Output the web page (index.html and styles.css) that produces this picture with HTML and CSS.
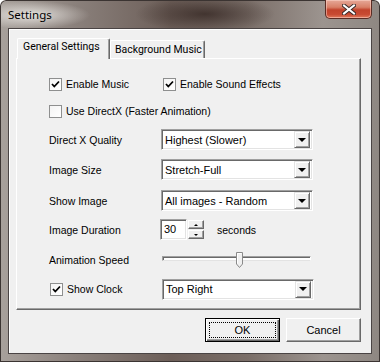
FILE: index.html
```html
<!DOCTYPE html>
<html lang="en">

<head>
    <meta charset="UTF-8">
    <title>Settings</title>
    <link rel="stylesheet" href="styles.css">
</head>

<body>
    <div class="window">
        <!-- タイトルバー -->
        <div class="titlebar">
            <span class="title">Settings</span>
            <div class="close-btn">
                <svg width="14" height="11" viewBox="0 0 14 11">
                    <path d="M2 1.5 L12 9.5 M12 1.5 L2 9.5" stroke="#3a2a28" stroke-width="4" stroke-linecap="square" />
                    <path d="M2 1.5 L12 9.5 M12 1.5 L2 9.5" stroke="#fff" stroke-width="2" stroke-linecap="square" />
                </svg>
            </div>
        </div>

        <div class="client">
            <!-- タブ -->
            <div class="tabs">
                <div class="tab active">General Settings</div>
                <div class="tab">Background Music</div>
            </div>

            <div class="panel">
                <div class="row row-1">
                    <div class="check first">
                        <span class="box"><svg width="11" height="11" viewBox="0 0 11 11"><polyline points="2,5 4.3,7.5 9,2.5" fill="none" stroke="#000" stroke-width="1.8" /></svg></span>
                        <span>Enable Music</span>
                    </div>
                    <div class="check">
                        <span class="box"><svg width="11" height="11" viewBox="0 0 11 11"><polyline points="2,5 4.3,7.5 9,2.5" fill="none" stroke="#000" stroke-width="1.8" /></svg></span>
                        <span>Enable Sound Effects</span>
                    </div>
                </div>

                <div class="row row-2">
                    <div class="check">
                        <span class="box"></span>
                        <span>Use DirectX (Faster Animation)</span>
                    </div>
                </div>

                <div class="row row-3">
                    <span class="label">Direct X Quality</span>
                    <div class="combo"><span class="value">Highest (Slower)</span><span class="drop"></span></div>
                </div>

                <div class="row row-4">
                    <span class="label">Image Size</span>
                    <div class="combo"><span class="value">Stretch-Full</span><span class="drop"></span></div>
                </div>

                <div class="row row-5">
                    <span class="label">Show Image</span>
                    <div class="combo"><span class="value">All images - Random</span><span class="drop"></span></div>
                </div>

                <div class="row row-6">
                    <span class="label">Image Duration</span>
                    <div class="num">30</div>
                    <div class="spin">
                        <span class="spin-btn"><i class="up"></i></span>
                        <span class="spin-btn"><i class="down"></i></span>
                    </div>
                    <span class="unit">seconds</span>
                </div>

                <div class="row row-7">
                    <span class="label">Animation Speed</span>
                    <div class="slider">
                        <div class="track"></div>
                        <svg class="thumb" width="7" height="16" viewBox="0 0 7 16">
                            <path d="M0.5 0.5 H6.5 V12 L3.5 15.5 L0.5 12 Z" fill="#f0f0f0" stroke="#8a8a8a" />
                            <path d="M1.5 1.5 H5.5 M1.5 1.5 V11.5" stroke="#fff" fill="none" />
                        </svg>
                    </div>
                </div>

                <div class="row row-8">
                    <div class="check label">
                        <span class="box"><svg width="11" height="11" viewBox="0 0 11 11"><polyline points="2,5 4.3,7.5 9,2.5" fill="none" stroke="#000" stroke-width="1.8" /></svg></span>
                        <span>Show Clock</span>
                    </div>
                    <div class="combo"><span class="value">Top Right</span><span class="drop"></span></div>
                </div>
            </div>

            <!-- ボタン -->
            <div class="buttons">
                <div class="btn default"><span class="focus">OK</span></div>
                <div class="btn">Cancel</div>
            </div>
        </div>
    </div>
</body>

</html>
```

FILE: styles.css
```css
html,
body {
    margin: 0;
    padding: 0;
    width: 380px;
    height: 362px;
    overflow: hidden;
    background: #fff;
}

.window {
    width: 380px;
    height: 362px;
    box-sizing: border-box;
    padding: 0 8px 8px 8px;
    display: flex;
    flex-direction: column;
    border-radius: 6px 6px 0 0;
    background:
        radial-gradient(ellipse 60px 14px at 30px 15px, rgba(235, 232, 228, 0.9), rgba(235, 232, 228, 0)),
        radial-gradient(ellipse 70px 18px at 205px 14px, rgba(50, 36, 32, 0.75), rgba(50, 36, 32, 0)),
        linear-gradient(90deg, #a8a19c 0%, #8a807b 20%, #6c5e58 45%, #7a6e68 65%, #9c948f 85%, #8e8782 100%);
    box-shadow: inset 0 0 0 1px #3b3432;
}

/* タイトルバー */
.titlebar {
    height: 28px;
    display: flex;
    align-items: flex-start;
}

.title {
    margin-top: 7px;
    font-family: "Noto Sans", sans-serif;
    font-size: 11.5px;
    color: #000;
}

.close-btn {
    margin-left: auto;
    width: 47px;
    height: 19px;
    box-sizing: border-box;
    border: 1px solid #5a2c24;
    border-top: none;
    border-radius: 0 0 5px 5px;
    background: linear-gradient(180deg, #e6a898 0%, #d88068 40%, #c2432c 55%, #c84a32 80%, #e07a5c 100%);
    box-shadow: inset 0 0 0 1px rgba(255, 220, 210, 0.5);
    display: flex;
    justify-content: center;
    align-items: center;
}

/* クライアント領域 */
.client {
    flex: 1;
    background: #f0f0f0;
    border: 1px solid #4a4444;
    box-shadow: inset 1px 1px 0 #fff;
    padding: 9px 10px 0 7px;
    font-family: "Liberation Sans", Arial, sans-serif;
    font-size: 10.5px;
    color: #000;
}

.tabs {
    display: flex;
    align-items: flex-end;
    padding-left: 1px;
    height: 20px;
    position: relative;
    z-index: 2;
}

.tab {
    box-sizing: border-box;
    height: 18px;
    width: 95px;
    padding: 2px 0 0 4px;
    border-top: 1px solid #fff;
    border-left: 1px solid #fff;
    border-right: 1px solid #696969;
    box-shadow: inset -1px 0 0 #a0a0a0;
    border-radius: 2px 2px 0 0;
    background: #f0f0f0;
    font-family: Roboto, sans-serif;
    font-size: 10.5px;
    white-space: nowrap;
}

.tab.active {
    width: 93px;
    height: 21px;
    margin-bottom: -1px;
    padding: 1px 0 0 5px;
}

.panel {
    box-sizing: border-box;
    width: 345px;
    height: 252px;
    border-top: 1px solid #fff;
    border-left: 1px solid #fff;
    border-right: 1px solid #696969;
    border-bottom: 1px solid #696969;
    box-shadow: inset -1px -1px 0 #a0a0a0;
    padding-left: 32px;
}

.row {
    display: flex;
    align-items: center;
}

.row-1 { margin-top: 18px; height: 14px; }
.row-2 { margin-top: 13px; height: 14px; }
.row-3 { margin-top: 11px; height: 21px; }
.row-4 { margin-top: 9px; height: 21px; }
.row-5 { margin-top: 10px; height: 21px; }
.row-6 { margin-top: 8px; height: 21px; }
.row-7 { margin-top: 10px; height: 20px; }
.row-8 { margin-top: 9px; height: 20px; }

.label {
    width: 112px;
    flex-shrink: 0;
}

.check {
    display: flex;
    align-items: center;
    gap: 4px;
}

.check.first {
    width: 114px;
}

.box {
    width: 13px;
    height: 13px;
    box-sizing: border-box;
    border: 1px solid #8e8f8f;
    background: linear-gradient(135deg, #f4f4f4, #fff);
    display: flex;
    align-items: center;
    justify-content: center;
}

.row-8 .check {
    padding-left: 1px;
}

/* コンボボックス */
.combo {
    width: 152px;
    height: 21px;
    box-sizing: border-box;
    background: #fff;
    border-top: 1px solid #a0a0a0;
    border-left: 1px solid #a0a0a0;
    border-right: 1px solid #fff;
    border-bottom: 1px solid #fff;
    box-shadow: inset 1px 1px 0 #696969, inset -1px -1px 0 #e3e3e3;
    display: flex;
    align-items: center;
    padding: 2px;
    font-size: 11px;
}

.combo .value {
    flex: 1;
    padding-left: 1px;
}

.drop {
    width: 16px;
    height: 17px;
    box-sizing: border-box;
    background: #f0f0f0;
    border-top: 1px solid #e3e3e3;
    border-left: 1px solid #e3e3e3;
    border-right: 1px solid #696969;
    border-bottom: 1px solid #696969;
    box-shadow: inset 1px 1px 0 #fff, inset -1px -1px 0 #a0a0a0;
    display: flex;
    align-items: center;
    justify-content: center;
}

.drop::after {
    content: "";
    border-left: 4px solid transparent;
    border-right: 4px solid transparent;
    border-top: 4px solid #000;
}

/* スピン */
.num {
    width: 27px;
    height: 21px;
    box-sizing: border-box;
    margin-left: -1px;
    background: #fff;
    border-top: 1px solid #a0a0a0;
    border-left: 1px solid #a0a0a0;
    border-right: 1px solid #fff;
    border-bottom: 1px solid #fff;
    box-shadow: inset 1px 1px 0 #696969, inset -1px -1px 0 #e3e3e3;
    padding: 3px 0 0 3px;
    font-size: 11px;
}

.spin {
    display: flex;
    flex-direction: column;
    gap: 1px;
    margin-left: 1px;
}

.spin-btn {
    width: 16px;
    height: 9px;
    box-sizing: border-box;
    background: #f0f0f0;
    border-top: 1px solid #fff;
    border-left: 1px solid #fff;
    border-right: 1px solid #696969;
    border-bottom: 1px solid #696969;
    box-shadow: inset -1px -1px 0 #a0a0a0;
    display: flex;
    align-items: center;
    justify-content: center;
}

.spin-btn i {
    border-left: 2px solid transparent;
    border-right: 2px solid transparent;
}

.spin-btn .up {
    border-bottom: 2px solid #000;
}

.spin-btn .down {
    border-top: 2px solid #000;
}

.unit {
    margin-left: 13px;
}

/* スライダー */
.slider {
    position: relative;
    width: 149px;
    height: 20px;
    margin-left: 1px;
}

.track {
    position: absolute;
    left: 0;
    right: 0;
    top: 6px;
    height: 5px;
    box-sizing: border-box;
    background: #fff;
    border-top: 1px solid #a0a0a0;
    border-left: 1px solid #a0a0a0;
    border-right: 1px solid #fff;
    border-bottom: 1px solid #e3e3e3;
    box-shadow: inset 1px 1px 0 #696969;
}

.thumb {
    position: absolute;
    left: 74px;
    top: 2px;
}

/* ボタン */
.buttons {
    width: 345px;
    display: flex;
    justify-content: flex-end;
    gap: 6px;
    margin-top: 8px;
}

.btn {
    width: 75px;
    height: 24px;
    box-sizing: border-box;
    background: #f0f0f0;
    border-top: 1px solid #fff;
    border-left: 1px solid #fff;
    border-right: 1px solid #696969;
    border-bottom: 1px solid #696969;
    box-shadow: inset -1px -1px 0 #a0a0a0;
    display: flex;
    align-items: center;
    justify-content: center;
    font-size: 11px;
}

.btn.default {
    border: 1px solid #000;
    box-shadow: inset 1px 1px 0 #fff, inset -1px -1px 0 #696969, inset -2px -2px 0 #a0a0a0;
    padding: 3px;
}

.btn .focus {
    flex: 1;
    align-self: stretch;
    border: 1px dotted #000;
    display: flex;
    align-items: center;
    justify-content: center;
}
```
